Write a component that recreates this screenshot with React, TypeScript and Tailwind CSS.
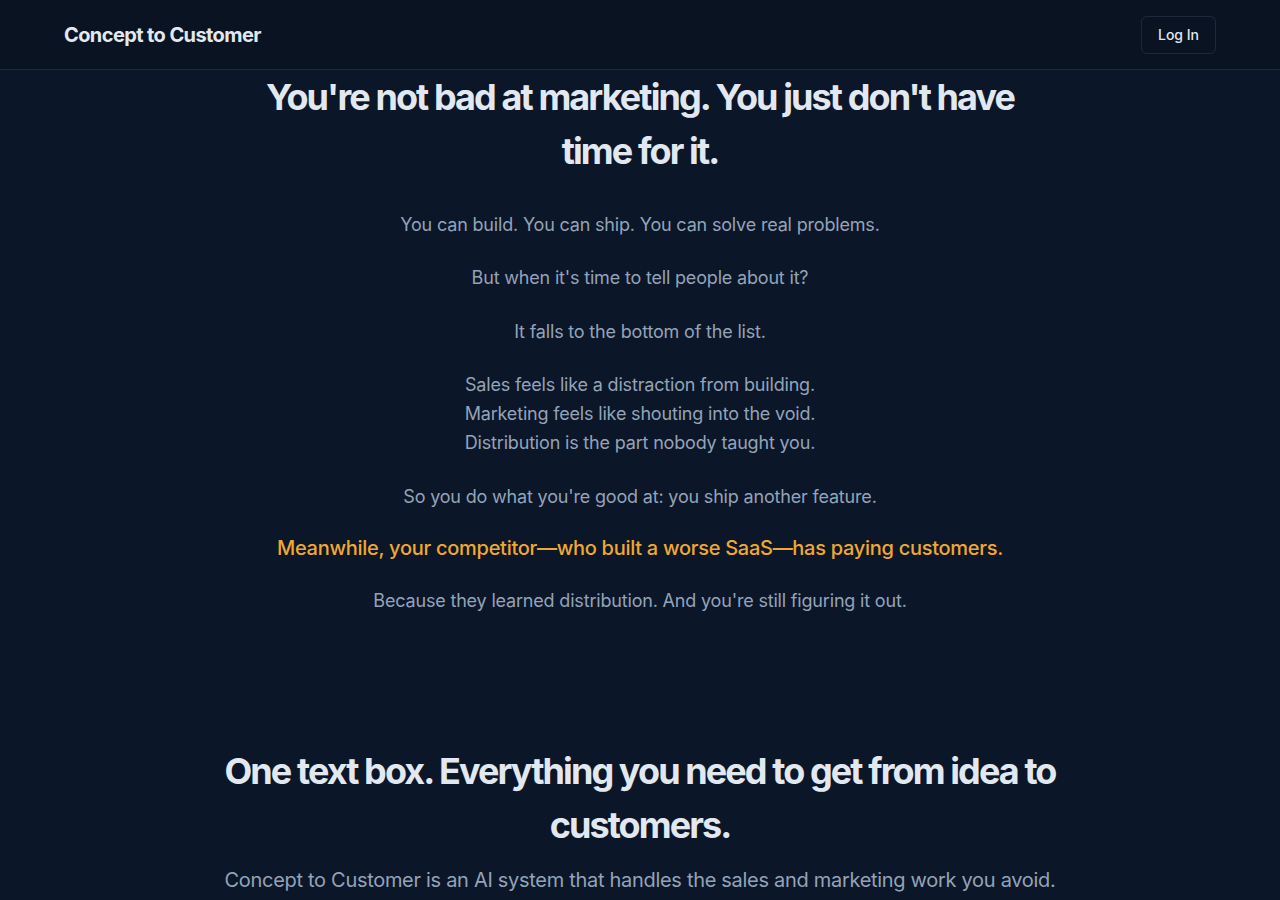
const FONT = { fontFamily: 'Inter, "Noto Sans", sans-serif' };

function Header() {
  return (
    <header className="flex h-[70px] items-center justify-between border-b border-[#1e293b] bg-[#0a1322] px-16">
      <span className="text-xl font-bold tracking-[-0.03em] text-[#e2e8f0]">Concept to Customer</span>
      <button
        type="button"
        className="rounded-md border border-[#1e293b] px-4 py-2 text-sm font-medium text-[#e2e8f0]"
      >
        Log In
      </button>
    </header>
  );
}

export default function App() {
  return (
    <div style={FONT} className="min-h-screen bg-[#0b1628]">
      <Header />

      <section className="mx-auto flex max-w-3xl flex-col items-center pb-16 text-center">
        <h1 className="text-4xl leading-[54px] font-bold tracking-[-0.053em] text-[#e2e8f0]">
          You're not bad at marketing. You just don't have time for it.
        </h1>

        <div className="mt-8 flex flex-col gap-6 text-lg leading-relaxed tracking-[-0.01em] text-[#94a3b8]">
          <p>You can build. You can ship. You can solve real problems.</p>
          <p>But when it's time to tell people about it?</p>
          <p>It falls to the bottom of the list.</p>
          <p>
            Sales feels like a distraction from building.
            <br />
            Marketing feels like shouting into the void.
            <br />
            Distribution is the part nobody taught you.
          </p>
          <p>So you do what you're good at: you ship another feature.</p>
          <p className="text-xl leading-snug font-medium tracking-[-0.014em] text-[#f0a830]">
            Meanwhile, your competitor—who built a worse SaaS—has paying customers.
          </p>
          <p>Because they learned distribution. And you're still figuring it out.</p>
        </div>
      </section>

      <section className="mx-auto flex max-w-4xl flex-col items-center pt-16 pb-16 text-center">
        <h2 className="text-4xl leading-[54px] font-bold tracking-[-0.053em] text-[#e2e8f0]">
          One text box. Everything you need to get from idea to customers.
        </h2>
        <p className="mt-3 text-xl leading-relaxed tracking-[-0.015em] text-[#94a3b8]">
          Concept to Customer is an AI system that handles the sales and marketing work you avoid.
        </p>
      </section>
    </div>
  );
}
